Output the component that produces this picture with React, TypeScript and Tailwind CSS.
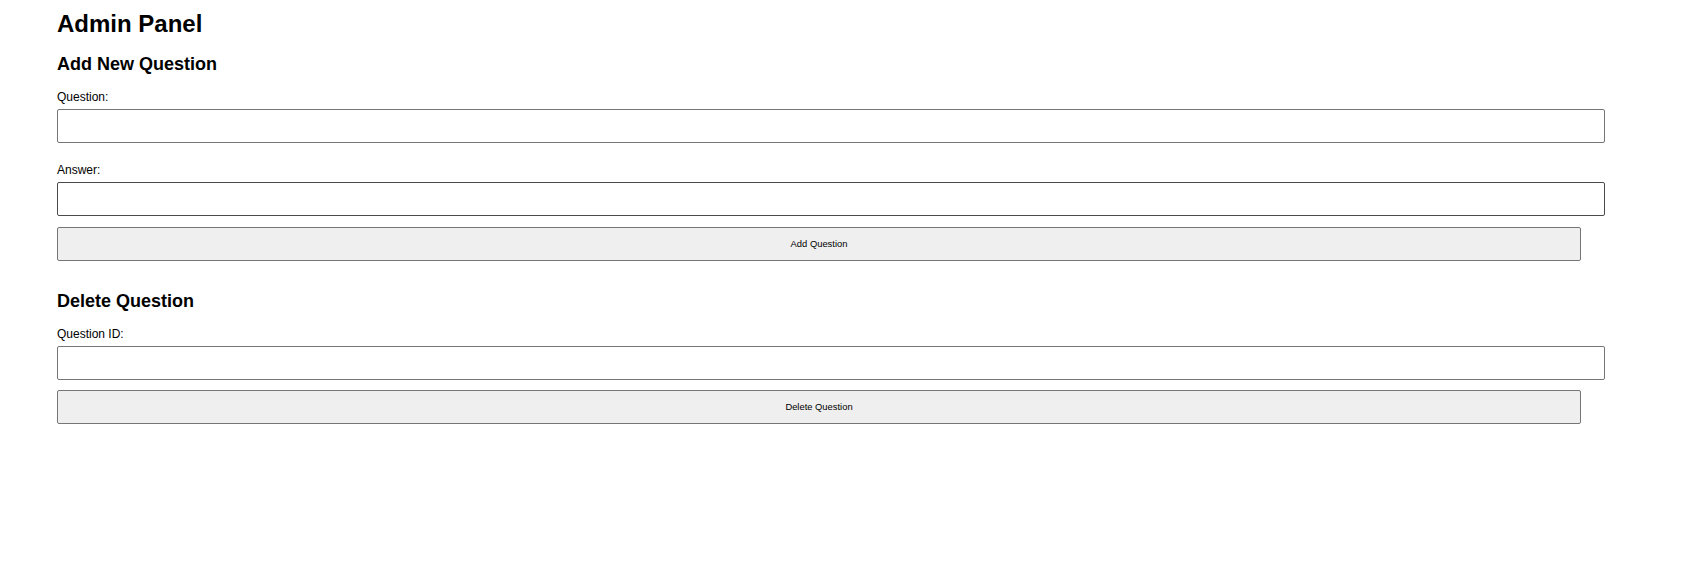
import React from "react";

function Field({ label, dark, labelClass, inputClass }: { label: string; dark?: boolean; labelClass: string; inputClass: string }) {
  return (
    <>
      <label className={"block text-[12px] leading-[14px] text-black " + labelClass}>{label}</label>
      <input
        type="text"
        className={
          "block w-[1548px] h-[34px] rounded-[2px] border bg-white px-[11px] text-[13px] outline-none " +
          (dark ? "border-[#4a4a4a] " : "border-[#767676] ") +
          inputClass
        }
      />
    </>
  );
}

function ActionButton({ label, className }: { label: string; className: string }) {
  return (
    <button
      type="button"
      className={
        "block w-[1524px] h-[34px] rounded-[2px] border border-[#767676] bg-[#efefef] text-[9.4px] text-black " +
        className
      }
    >
      {label}
    </button>
  );
}

export default function App() {
  return (
    <div className="min-h-[561px] bg-white pl-[57px] pt-[10px] font-['Liberation_Sans',Arial,sans-serif] text-black">
      <h1 className="text-[24px] leading-[28px] font-bold">Admin Panel</h1>

      <h2 className="mt-[16px] text-[18px] leading-[21px] font-bold">Add New Question</h2>
      <Field label="Question:" labelClass="mt-[15px]" inputClass="mt-[5px]" />
      <Field label="Answer:" dark labelClass="mt-[20px]" inputClass="mt-[5px]" />
      <ActionButton label="Add Question" className="mt-[11px]" />

      <h2 className="mt-[30px] text-[18px] leading-[21px] font-bold">Delete Question</h2>
      <Field label="Question ID:" labelClass="mt-[15px]" inputClass="mt-[5px]" />
      <ActionButton label="Delete Question" className="mt-[10px]" />
    </div>
  );
}
